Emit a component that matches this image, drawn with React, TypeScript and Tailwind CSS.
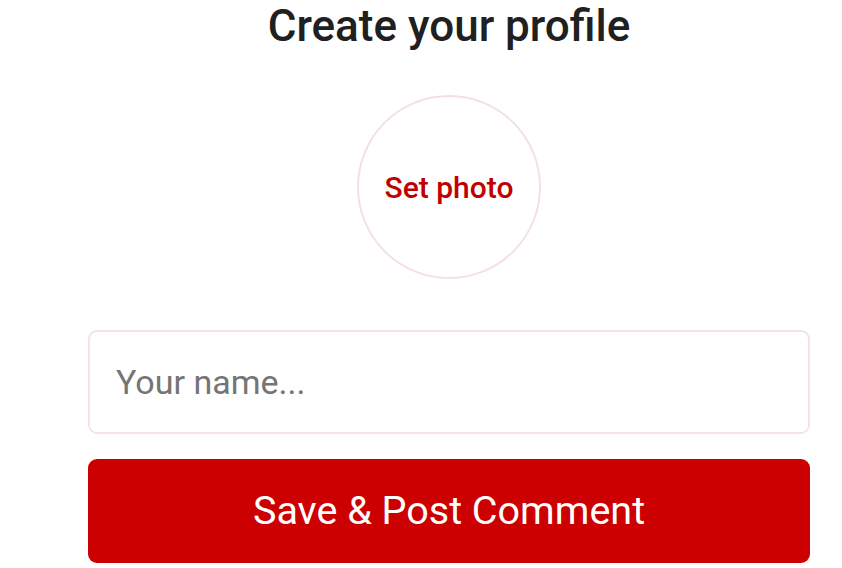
export default function App() {
  return (
    <div className="h-[568px] w-[842px] overflow-hidden bg-white font-['Roboto',sans-serif]">
      <div className="ml-[88px] flex w-[722px] flex-col items-center">
        <h1 className="text-[44px] leading-[52px] font-medium text-[#202020]">Create your profile</h1>
        <button className="mt-[43px] flex h-[184px] w-[184px] items-center justify-center rounded-full border-2 border-[#f3e1df] bg-white text-[30px] font-medium text-[#c00000]">
          Set photo
        </button>
        <div className="mt-[51px] flex h-[104px] w-full items-center rounded-[9px] border-2 border-[#f5e4e2] bg-white px-[26px]">
          <input
            placeholder="Your name..."
            className="w-full bg-transparent text-[34px] text-[#222] outline-none placeholder:text-[#757575]"
          />
        </div>
        <button className="mt-[25px] flex h-[104px] w-full items-center justify-center rounded-[9px] bg-[#cc0000] text-[39.5px] text-white">
          Save &amp; Post Comment
        </button>
      </div>
    </div>
  );
}
